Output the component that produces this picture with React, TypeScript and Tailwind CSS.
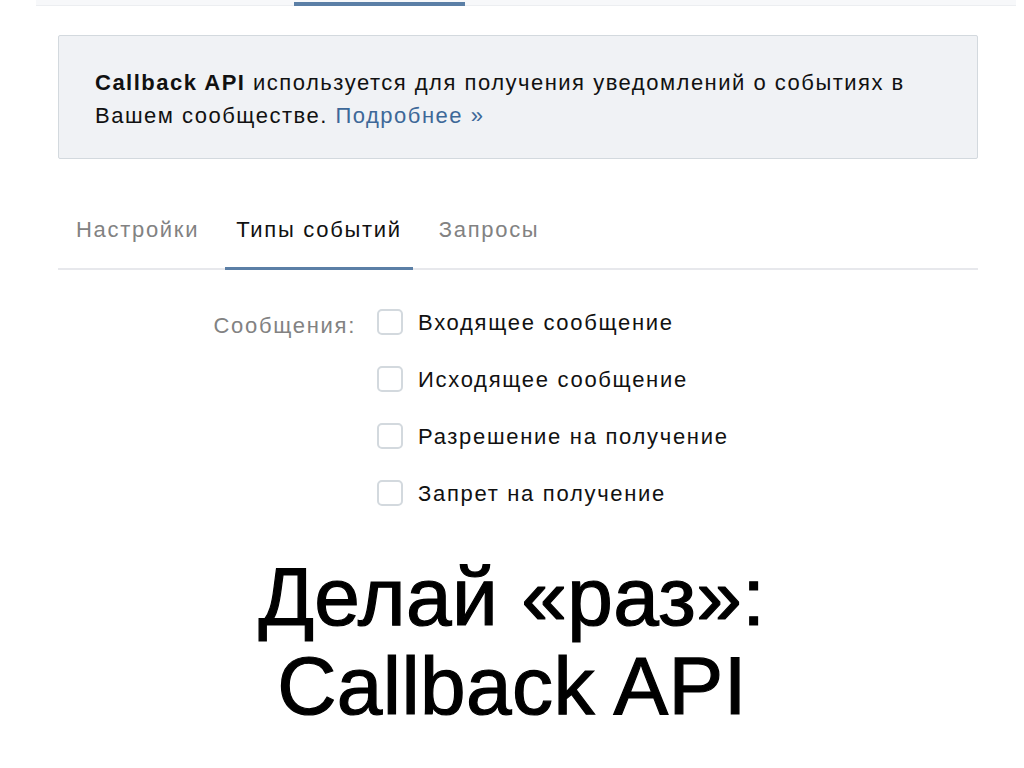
const events = [
  "Входящее сообщение",
  "Исходящее сообщение",
  "Разрешение на получение",
  "Запрет на получение",
];

const tabs = ["Настройки", "Типы событий", "Запросы"];

export default function App() {
  return (
    <div
      className="w-[1024px] h-[768px] bg-white overflow-hidden relative"
      style={{ fontFamily: '"Liberation Sans", Arial, sans-serif' }}
    >
      {/* top tab strip remnant */}
      <div className="ml-[36px] w-[980px] h-[6px] bg-[#f7f8fa] border-b border-[#eceef1] relative">
        <div className="absolute left-[258px] top-[2px] w-[171px] h-[4px] bg-[#5b7fa6]" />
      </div>

      <div className="ml-[58px] w-[920px] mt-[29px] text-[22px] tracking-[1.7px]">
        {/* info block */}
        <div className="h-[124px] bg-[#f0f2f5] border border-[#d3d9de] rounded-[2px] pl-[36px] pt-[30px] leading-[33px] tracking-[1.5px] text-[#111]">
          <b>Callback API</b> используется для получения уведомлений о событиях в
          <br />
          Вашем сообществе. <span className="text-[#3d6898]">Подробнее »</span>
        </div>

        {/* tabs */}
        <div className="mt-[47px] flex pl-[18px] gap-[37px] border-b-2 border-[#e7e8ec] h-[64px]">
          {tabs.map((t, i) => (
            <div
              key={t}
              className={
                i === 1
                  ? "relative text-[#111] pt-[7px] px-[11px] -mx-[11px] border-b-[3px] border-[#5b7fa6] -mb-[2px]"
                  : "text-[#828282] pt-[7px]"
              }
            >
              {t}
            </div>
          ))}
        </div>

        {/* events */}
        <div className="mt-[39px] flex">
          <div className="w-[319px] text-right pr-[21px] text-[#828282]">
            Сообщения:
          </div>
          <div className="flex flex-col gap-[31px]">
            {events.map((e) => (
              <div key={e} className="flex items-center gap-[15px] h-[26px]">
                <div className="w-[26px] h-[26px] rounded-[5px] border-2 border-[#d3d9de] bg-white" />
                <span className="text-[#111]">{e}</span>
              </div>
            ))}
          </div>
        </div>
      </div>

      {/* slide title */}
      <div className="mt-[46px] text-center text-black text-[82px] leading-[89px] tracking-[0.4px] [-webkit-text-stroke:1.2px_black]">
        Делай «раз»:
        <br />
        Callback API
      </div>
    </div>
  );
}
